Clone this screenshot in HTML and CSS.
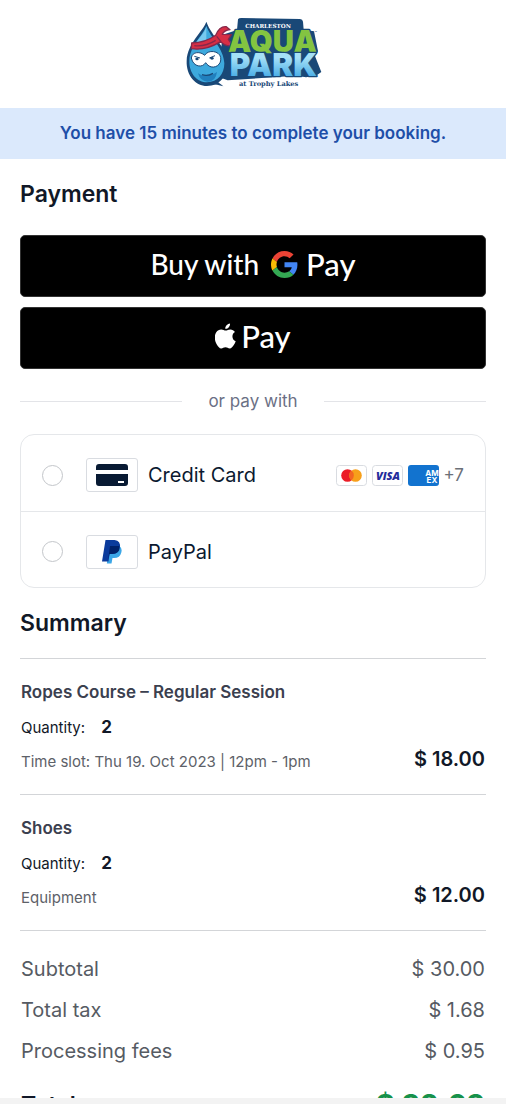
FILE: index.html
```html
<!DOCTYPE html>
<html lang="en">
<head>
<meta charset="utf-8">
<meta name="viewport" content="width=device-width, initial-scale=1">
<title>Payment</title>
<link rel="stylesheet" href="styles.css">
</head>
<body>
<div class="page">
  <header class="header">
    <svg class="logo" viewBox="0 0 462 270" role="img" aria-label="Charleston Aqua Park at Trophy Lakes">
      <defs>
        <linearGradient id="water" x1="0" y1="0" x2="0" y2="1">
          <stop offset=".3" stop-color="#a5e0f7"/><stop offset=".8" stop-color="#4aaee6"/>
        </linearGradient>
      </defs>
      <path d="M186 34Q188 30 196 30L372 33Q380 34 381 41L383 65 414 70 426 130 416 142 436 192 420 203 390 208 360 203 155 217 126 206 140 80 183 66Z" fill="#194877"/>
      <path d="M91 41C80 72 34 105 32 158C30 202 59 234 93 234C130 234 156 204 155 166C154 118 108 88 91 41Z" fill="#194877"/>
      <path d="M91 54C80 84 42 112 40 158C39 197 64 223 93 223C125 223 145 198 145 166C143 121 105 91 91 54Z" fill="#3da9dd"/>
      <path d="M91 55C86 76 68 91 58 108L91 98Z" fill="#78c9ef"/>
      <path d="M66 196Q90 213 123 192Q119 222 94 221Q72 219 66 196Z" fill="#2180be"/>
      <path d="M78 200Q94 206 111 196" fill="none" stroke="#194877" stroke-width="4"/>
      <path d="M46 150C48 130 74 130 86 142C96 124 130 128 134 148C138 170 116 184 99 174Q92 169 89 164C80 180 52 178 46 150Z" fill="#fff" stroke="#194877" stroke-width="3"/>
      <ellipse cx="63" cy="153" rx="5" ry="4" fill="#194877"/><ellipse cx="108" cy="151" rx="5" ry="4" fill="#194877"/>
      <path d="M55 145L72 150M100 150L117 143" stroke="#194877" stroke-width="3"/>
      <path d="M47 105Q87 105 119 82Q130 54 151 56L162 65Q144 67 139 79L166 80 157 94 170 112Q151 117 134 101Q88 129 46 122Z" fill="#d72e45" stroke="#86284a" stroke-width="4" stroke-linejoin="round"/>
      <path d="M122 85L135 101M55 113Q87 117 119 97" fill="none" stroke="#86284a" stroke-width="4"/>
      <text class="logo-small" x="276" y="60">CHARLESTON</text>
      <text class="logo-aqua" x="289" y="131">AQUA</text>
      <text class="logo-park" x="292" y="205">PARK</text>
      <path d="M100 229Q120 228 142 235Q128 224 123 219" fill="#194877"/>
      <text class="logo-foot" x="278" y="234">at Trophy Lakes</text>
      <text class="logo-tm" x="419" y="78">™</text>
    </svg>
  </header>

  <p class="notice">You have 15 minutes to complete your booking.</p>

  <main class="content">
    <section class="payment">
      <h1 class="heading">Payment</h1>
      <div class="wallets">
        <button class="wallet" type="button">
          <span class="wallet-lead">Buy with</span>
          <svg class="google" viewBox="0 0 48 48" aria-label="Google">
            <path fill="#ea4335" d="M24 9.5c3.54 0 6.71 1.22 9.21 3.6l6.85-6.85C35.9 2.38 30.47 0 24 0 14.62 0 6.51 5.38 2.56 13.22l7.98 6.19C12.43 13.72 17.74 9.5 24 9.5z"/>
            <path fill="#4285f4" d="M46.98 24.55c0-1.57-.15-3.09-.38-4.55H24v9.02h12.94c-.58 2.96-2.26 5.48-4.78 7.18l7.73 6c4.51-4.18 7.09-10.36 7.09-17.65z"/>
            <path fill="#fbbc05" d="M10.53 28.59c-.48-1.45-.76-2.99-.76-4.59s.27-3.14.76-4.59l-7.98-6.19C.92 16.46 0 20.12 0 24s.92 7.54 2.56 10.78l7.97-6.19z"/>
            <path fill="#34a853" d="M24 48c6.48 0 11.93-2.13 15.89-5.81l-7.73-6c-2.15 1.45-4.92 2.3-8.16 2.3-6.26 0-11.57-4.22-13.47-9.91l-7.98 6.19C6.51 42.62 14.62 48 24 48z"/>
          </svg>
          <span class="wallet-pay">Pay</span>
        </button>
        <button class="wallet wallet-apple" type="button">
          <svg class="apple" viewBox="0 0 20 24" aria-label="Apple">
            <path fill="#fff" d="M14.3 0c.2 1.3-.4 2.600-1.200 3.600-.8 1-2 1.700-3.300 1.600-.2-1.300.4-2.500 1.200-3.400C11.800.8 13.200.1 14.300 0zM19 8.300c-1.500.9-2.400 2.300-2.400 4.100 0 2.100 1.200 3.700 3.100 4.500-.4 1.300-1 2.500-1.800 3.600-1.100 1.600-2.200 3.300-3.900 3.300-1.700 0-2.100-1-4-1s-2.500 1-4 1.100c-1.700.1-2.900-1.700-4-3.300C-.3 17.300-1.200 11.700 1.200 8.400c1.100-1.600 2.900-2.600 4.700-2.600s2.900 1 4.400 1c1.400 0 2.300-1 4.400-1 1.600 0 3.300.9 4.300 2.500z"/>
          </svg>
          <span class="wallet-pay">Pay</span>
        </button>
      </div>
      <div class="divider">or pay with</div>
      <div class="methods">
        <label class="method">
          <input class="radio" type="radio" name="method">
          <span class="method-icon">
            <svg width="32" height="22" viewBox="0 0 32 22">
              <path fill="#081a33" d="M3 0H29Q32 0 32 3V6H0V3Q0 0 3 0ZM0 10H32V19Q32 22 29 22H3Q0 22 0 19Z"/>
              <rect x="22" y="17" width="6" height="2" fill="#fff"/>
            </svg>
          </span>
          <span class="method-name">Credit Card</span>
          <span class="brands">
            <svg class="brand" viewBox="0 0 31 21" aria-label="Mastercard">
              <rect x=".5" y=".5" width="30" height="20" rx="3" fill="#fff" stroke="#d9dce1"/>
              <circle cx="11.500" cy="10.500" r="6.300" fill="#eb1c26"/><circle cx="19.500" cy="10.500" r="6.300" fill="#f79f1a"/>
              <path d="M15.500 5.600a6.300 6.300 0 0 1 0 9.800a6.300 6.300 0 0 1 0-9.800z" fill="#f26522"/>
            </svg>
            <svg class="brand" viewBox="0 0 31 21" aria-label="Visa">
              <rect x=".5" y=".5" width="30" height="20" rx="3" fill="#fff" stroke="#d9dce1"/>
              <text class="visa" x="16" y="15">VISA</text>
            </svg>
            <svg class="brand" viewBox="0 0 31 21" aria-label="American Express">
              <rect width="31" height="21" rx="3" fill="#1273cf"/>
              <text class="amex" x="24" y="11">AM</text>
              <text class="amex" x="24" y="18">EX</text>
            </svg>
            <span class="more">+7</span>
          </span>
        </label>
        <label class="method">
          <input class="radio" type="radio" name="method">
          <span class="method-icon">
            <svg width="20" height="24" viewBox="0 0 20 24">
              <path fill="#3ba6e6" d="M7 6H17.500Q20.500 8.500 19.300 12.500Q18 18 12 18H10.500L9.500 23.500H4.800L7 10Z"/>
              <path fill="#0b3b9c" d="M3.500 0H12.500Q19 .8 17.800 7.500Q16.500 14 10 14H7.500L6.500 21.500H0Z"/>
              <path fill="#002169" d="M8 6H17.500Q18.200 14 10 14H7.500L6.200 20Z"/>
            </svg>
          </span>
          <span class="method-name">PayPal</span>
        </label>
      </div>
    </section>

    <section class="summary">
      <h2 class="heading">Summary</h2>
      <article class="item">
        <div class="item-info">
          <h3 class="item-title">Ropes Course – Regular Session</h3>
          <p class="quantity">Quantity: <strong class="count">2</strong></p>
          <p class="detail">Time slot: Thu 19. Oct 2023 | 12pm - 1pm</p>
        </div>
        <strong class="price">$ 18.00</strong>
      </article>
      <article class="item">
        <div class="item-info">
          <h3 class="item-title">Shoes</h3>
          <p class="quantity">Quantity: <strong class="count">2</strong></p>
          <p class="detail">Equipment</p>
        </div>
        <strong class="price">$ 12.00</strong>
      </article>
      <dl class="totals">
        <div class="row"><dt>Subtotal</dt><dd>$ 30.00</dd></div>
        <div class="row"><dt>Total tax</dt><dd>$ 1.68</dd></div>
        <div class="row"><dt>Processing fees</dt><dd>$ 0.95</dd></div>
        <div class="row row-total"><dt>Total</dt><dd>$ 32.63</dd></div>
      </dl>
    </section>
  </main>
</div>
<footer class="bottom-bar"></footer>
</body>
</html>
```
FILE: styles.css
```css
* { box-sizing: border-box; }

body {
  margin: 0;
  height: 100vh;
  display: flex;
  flex-direction: column;
  background: #fff;
  color: #111827;
  font-family: Inter, "Liberation Sans", sans-serif;
}

h1, h2, h3, p, dl, dd { margin: 0; }

.page { flex: 1; min-height: 0; overflow: hidden; }
.bottom-bar { flex: none; height: 6px; background: #f3f3f3; }

.header { display: flex; justify-content: center; padding: 8px 0 10px; }
.logo { width: 154px; height: 90px; }
.logo text { text-anchor: middle; }
.logo-small { font: 700 17px "DejaVu Serif", serif; fill: #fff; }
.logo-aqua, .logo-park {
  font-family: Inter, sans-serif;
  font-weight: 900;
  stroke: #194877;
  stroke-width: 8px;
  paint-order: stroke;
  stroke-linejoin: round;
}
.logo-aqua { font-size: 88px; fill: #83c441; }
.logo-park { font-size: 94px; fill: url(#water); }
.logo-foot { font: 700 20px "DejaVu Serif", serif; fill: #194877; }
.logo-tm { font: 12px Inter, sans-serif; fill: #194877; }

.notice {
  padding: 12px 20px;
  background: #dbe9fc;
  color: #1e4fa8;
  font-size: 17px;
  font-weight: 600;
  line-height: 27px;
  text-align: center;
}

.content { padding: 20px 20px 40px; }
.heading { font-size: 23px; font-weight: 600; line-height: 30px; }

.wallets { display: grid; gap: 10px; margin-top: 26px; }
.wallet {
  display: flex;
  align-items: center;
  justify-content: center;
  gap: 8px;
  height: 62px;
  padding: 0 0 4px;
  border: 1px solid #333;
  border-radius: 5px;
  background: #000;
  color: #fff;
}
.wallet-apple { gap: 5px; }
.wallet-lead { margin-right: 4px; font: 500 28px/40px Lato, sans-serif; }
.wallet-pay { font: 500 31px/40px Lato, sans-serif; }
.google { width: 27px; height: 27px; }
.apple { width: 21px; height: 26px; }

.divider {
  display: flex;
  align-items: center;
  gap: 26px;
  margin: 19px 0 20px;
  color: #6b7085;
  font-size: 17px;
  line-height: 26px;
}
.divider::before, .divider::after { content: ""; flex: 1; height: 1px; background: #e3e4e8; }

.methods { border: 1px solid #e5e7ea; border-radius: 14px; }
.method { display: flex; align-items: center; height: 76px; padding: 4px 21px 0; }
.method + .method { border-top: 1px solid #e5e7ea; }
.radio {
  appearance: none;
  width: 21px;
  height: 21px;
  margin: 0 23px 0 0;
  border: 1px solid #c3c6ca;
  border-radius: 50%;
}
.method-icon {
  display: grid;
  place-items: center;
  width: 52px;
  height: 34px;
  margin-right: 10px;
  border: 1px solid #d9dce1;
  border-radius: 3px;
}
.method-name { color: #0b1930; font-size: 20px; }
.brands { display: flex; align-items: center; gap: 5px; margin-left: auto; }
.brand { width: 31px; height: 21px; }
.visa { font: italic 800 11px "Open Sans", sans-serif; fill: #242c9b; text-anchor: middle; }
.amex { font: 700 8px Inter, sans-serif; fill: #fff; text-anchor: middle; }
.more { color: #6b7078; font-size: 17px; }

.summary { margin-top: 20px; }
.summary .heading { margin-bottom: 20px; }
.item {
  display: flex;
  align-items: flex-end;
  justify-content: space-between;
  padding: 20px 1px;
  border-top: 1px solid #d3d5d8;
}
.item-info { display: grid; gap: 10px; }
.item-title { color: #3b404f; font-size: 17px; font-weight: 600; line-height: 26px; }
.quantity, .detail { font-size: 15px; line-height: 24px; }
.quantity { display: flex; align-items: baseline; gap: 16px; }
.count { font-size: 17px; font-weight: 700; }
.detail { color: #5d6168; }
.price { font-size: 20px; font-weight: 600; line-height: 30px; }

.totals { padding: 17px 1px 0; border-top: 1px solid #d3d5d8; color: #565b63; font-size: 20px; }
.row { display: flex; align-items: center; justify-content: space-between; min-height: 41px; }
.row-total { margin-top: 13px; color: #111827; font-size: 23px; font-weight: 600; }
.row-total dd { color: #16914a; font-size: 29px; font-weight: 700; }
```
